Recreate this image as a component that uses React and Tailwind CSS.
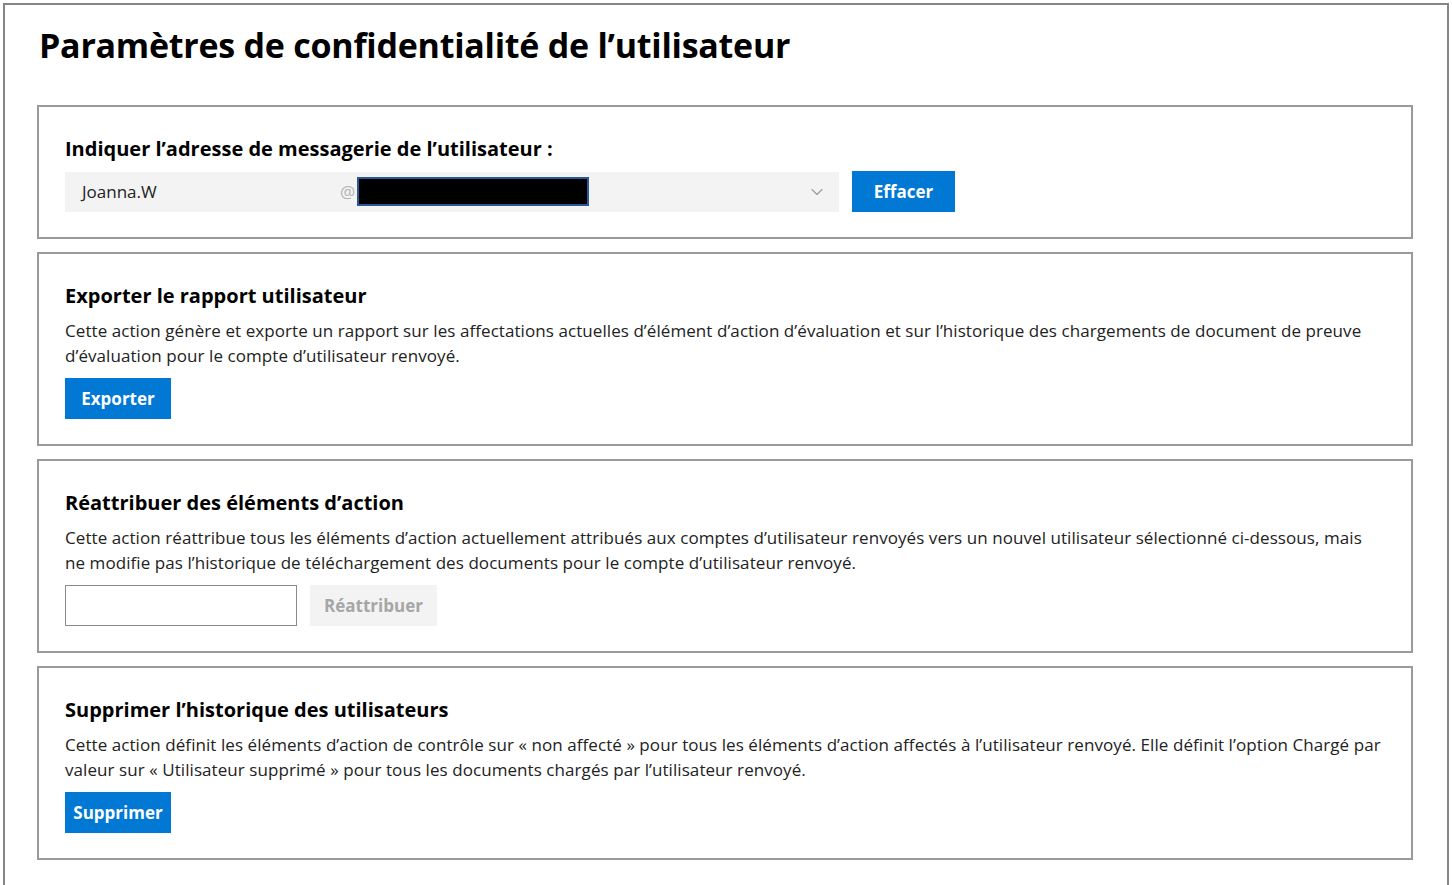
import { ChevronDown } from 'lucide-react';

const font = { fontFamily: '"Segoe UI", "Open Sans", "Noto Sans", sans-serif' };

const Card = ({ title, children }) => (
    <section className="border-2 border-[#9a9a9a] px-[26px] pt-[28px] pb-[25px]">
        <h2 className="text-[20px] leading-[28px] font-bold text-black">{title}</h2>
        {children}
    </section>
);

const BlueButton = ({ children, className = 'w-[106px]' }) => (
    <button className={`h-[41px] px-[8px] bg-[#0078d4] text-white text-[17px] font-bold ${className}`}>
        {children}
    </button>
);

export default function App() {
    return (
        <div className="min-h-screen bg-white pt-[3px] px-[3px]" style={font}>
            <div className="min-h-[882px] border-l-2 border-t-2 border-r-2 border-[#858585] pl-[32px] pr-[34px] pt-[18px] pb-[24px]">
                <h1 className="ml-[2px] text-[34px] leading-[44px] font-bold text-black tracking-[-0.25px]">
                    Paramètres de confidentialité de l’utilisateur
                </h1>

                <div className="mt-[38px] flex flex-col gap-[13px]">
                    {/* Email */}
                    <Card title="Indiquer l’adresse de messagerie de l’utilisateur :">
                        <div className="mt-[8px] flex items-center gap-[13px]">
                            <div className="w-[774px] h-[40px] bg-[#f3f3f3] flex items-center pl-[17px] pr-[12px]">
                                <span className="w-[258px] text-[17px] text-[#222]">Joanna.W</span>
                                <span className="text-[17px] text-[#b3b3b3]">@</span>
                                <div className="ml-[2px] w-[232px] h-[29px] bg-black border-2 border-[#2b5797]"></div>
                                <div className="flex-1" />
                                <ChevronDown className="w-[20px] h-[20px] text-[#9a9a9a]" strokeWidth={1.3} />
                            </div>
                            <BlueButton className="w-[103px]">Effacer</BlueButton>
                        </div>
                    </Card>

                    {/* Export */}
                    <Card title="Exporter le rapport utilisateur">
                        <p className="mt-[8px] text-[17px] leading-[25px] text-[#222] tracking-[0.07px]">
                            Cette action génère et exporte un rapport sur les affectations actuelles d’élément d’action d’évaluation et sur l’historique des chargements de document de preuve d’évaluation pour le compte d’utilisateur renvoyé.
                        </p>
                        <div className="mt-[10px]">
                            <BlueButton>Exporter</BlueButton>
                        </div>
                    </Card>

                    {/* Reassign */}
                    <Card title="Réattribuer des éléments d’action">
                        <p className="mt-[8px] text-[17px] leading-[25px] text-[#222] tracking-[0.07px]">
                            Cette action réattribue tous les éléments d’action actuellement attribués aux comptes d’utilisateur renvoyés vers un nouvel utilisateur sélectionné ci-dessous, mais ne modifie pas l’historique de téléchargement des documents pour le compte d’utilisateur renvoyé.
                        </p>
                        <div className="mt-[10px] flex gap-[13px]">
                            <input className="w-[232px] h-[41px] border border-[#8a8a8a] bg-white outline-none px-2" />
                            <button className="h-[41px] px-[14px] bg-[#f3f3f3] text-[#a6a6a6] text-[17px] font-bold">
                                Réattribuer
                            </button>
                        </div>
                    </Card>

                    {/* Delete history */}
                    <Card title="Supprimer l’historique des utilisateurs">
                        <p className="mt-[8px] text-[17px] leading-[25px] text-[#222] tracking-[0.07px]">
                            Cette action définit les éléments d’action de contrôle sur « non affecté » pour tous les éléments d’action affectés à l’utilisateur renvoyé. Elle définit l’option Chargé par valeur sur « Utilisateur supprimé » pour tous les documents chargés par l’utilisateur renvoyé.
                        </p>
                        <div className="mt-[10px]">
                            <BlueButton>Supprimer</BlueButton>
                        </div>
                    </Card>
                </div>
            </div>
        </div>
    );
}
